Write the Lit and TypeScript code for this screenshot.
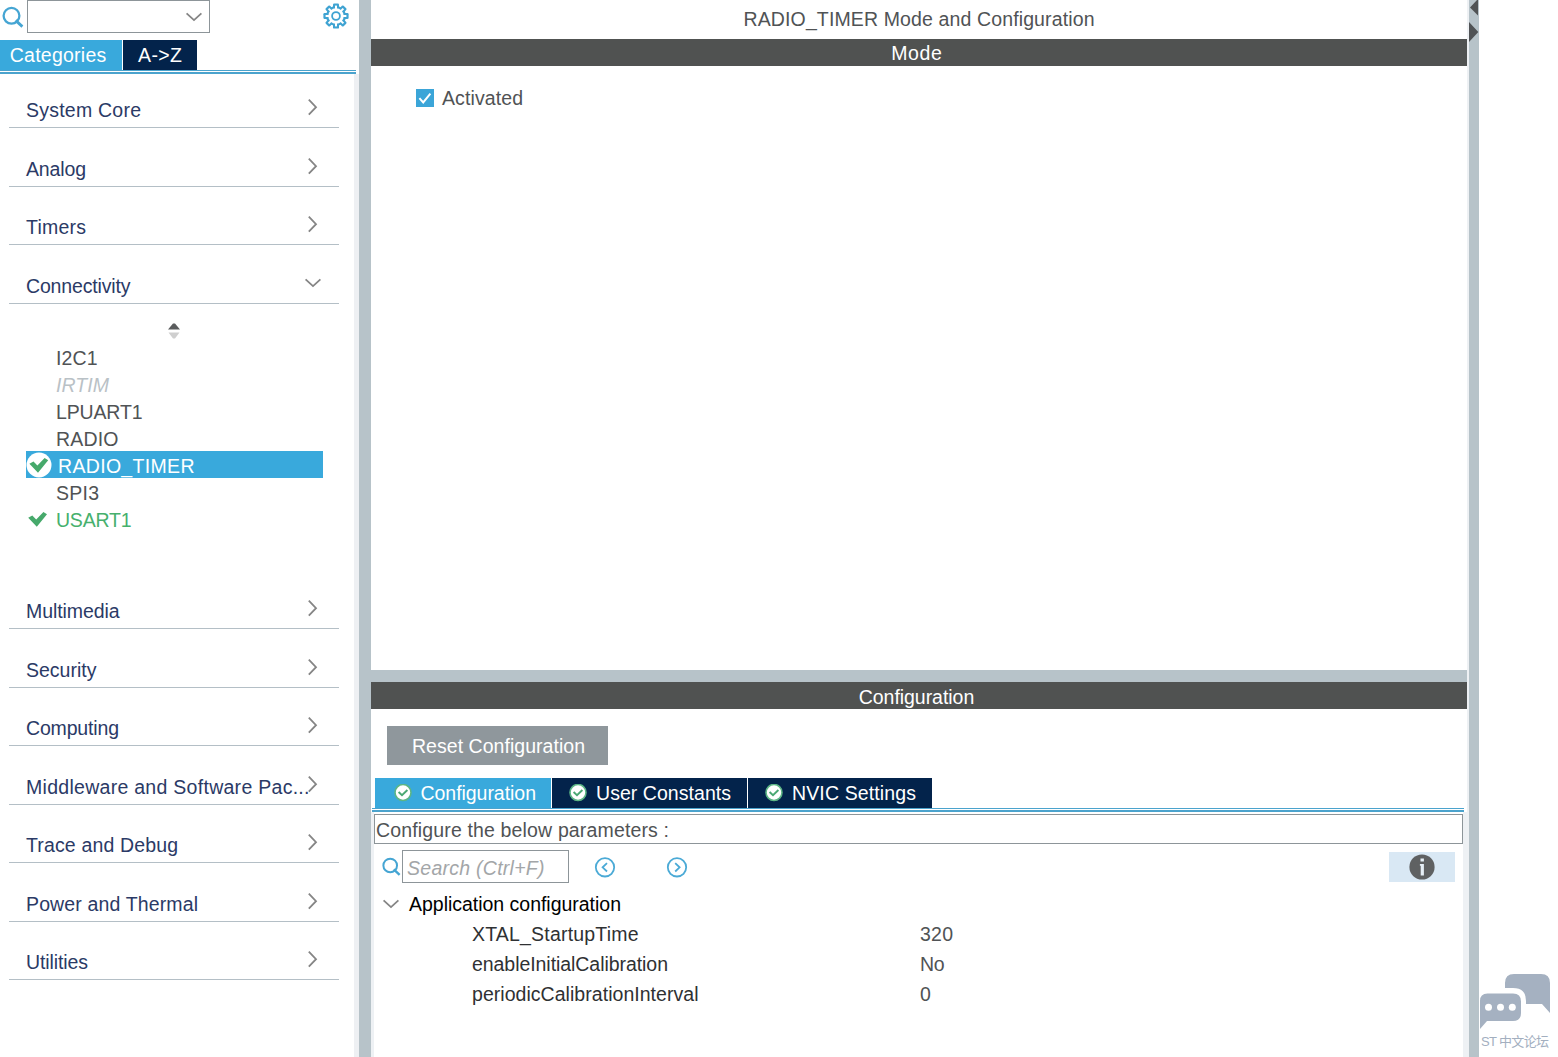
import { LitElement, html, css, svg, nothing } from "lit";
import { customElement, property } from "lit/decorators.js";
import { classMap } from "lit/directives/class-map.js";

/** Text run whose tracking is adjusted so that it spans a given width. */
@customElement("fit-text")
class FitText extends LitElement {
  static styles = css`
    :host { display: inline-block; white-space: pre; }
    .run { display: inline-block; }
  `;
  @property({ type: Number }) w = 0;
  @property() text = "";
  render() {
    return html`<span class="run">${this.text}</span>`;
  }
  updated() {
    const run = this.renderRoot.querySelector(".run") as HTMLElement;
    run.style.letterSpacing = "0px";
    const natural = run.getBoundingClientRect().width;
    const spacing = (this.w - natural) / Math.max(1, this.text.length - 1);
    run.style.letterSpacing = `${spacing}px`;
    run.style.marginRight = `${-spacing}px`;
  }
}

const fit = (text: string, w: number) => html`<fit-text .text=${text} .w=${w}></fit-text>`;

const chevronRight = html`<svg class="chev" width="18" height="18" viewBox="0 0 18 18">
  <path d="M4.8 1.7 12 9.2 4.8 16.7" fill="none" stroke="#858585" stroke-width="1.8"/></svg>`;
const chevronDown = html`<svg class="chev" width="18" height="18" viewBox="0 0 18 18">
  <path d="M1.6 5.4 9 12.1 16.4 5.4" fill="none" stroke="#858585" stroke-width="1.8"/></svg>`;

const magnifier = (size: number) => html`<svg width=${size} height=${size} viewBox="0 0 22 22">
  <circle cx="9.5" cy="9.8" r="7.9" fill="none" stroke="#45a5d3" stroke-width="2.3"/>
  <path d="M13.6 14.4 20.4 20.6" stroke="#45a5d3" stroke-width="2.8"/></svg>`;

const gearTeeth = Array.from({ length: 8 }, (_, i) => i * 45);
const gear = html`<svg width="26" height="26" viewBox="-13 -13 26 26">
  <g fill="#3fa3d2">${gearTeeth.map((a) => svg`<rect x="-3" y="-12.6" width="6" height="5" rx="1.2" transform="rotate(${a})"/>`)}</g>
  <circle r="10" fill="#3fa3d2"/>
  <g fill="#fff">${gearTeeth.map((a) => svg`<rect x="-1" y="-10.4" width="2" height="4" transform="rotate(${a})"/>`)}</g>
  <circle r="7.7" fill="#fff"/>
  <circle r="3.9" fill="none" stroke="#3fa3d2" stroke-width="1.8"/></svg>`;

const tick = svg`<path d="M0.2 6.8 4.3 4.6 8.2 8.4 15.4 1 19 3.2 8.8 15.8 Z" fill="#46a96b"/>`;
const plainTick = html`<svg width="20" height="17" viewBox="0 0 20 17">${tick}</svg>`;
const ringTick = html`<svg width="26" height="26" viewBox="0 0 26 26">
  <circle cx="13" cy="13" r="12.5" fill="#fff"/><g transform="translate(3.2 5)">${tick}</g></svg>`;

const tabTick = html`<svg width="18" height="18" viewBox="0 0 18 18">
  <circle cx="9" cy="8.5" r="8" fill="#fff" stroke="#5cb585" stroke-width="1.6"/>
  <path d="M4.6 8 8 11.2 13.4 6" fill="none" stroke="#4aa873" stroke-width="1.9"/></svg>`;

const navCircle = (d: string) => html`<svg width="22" height="22" viewBox="0 0 22 22">
  <circle cx="11" cy="11.3" r="9.2" fill="none" stroke="#4baad6" stroke-width="1.8"/>
  <path d=${d} fill="none" stroke="#4baad6" stroke-width="1.8"/></svg>`;

type Category = { name: string; w: number; open?: boolean };
const categories: Category[] = [
  { name: "System Core", w: 115 },
  { name: "Analog", w: 60 },
  { name: "Timers", w: 60 },
  { name: "Connectivity", w: 104.5, open: true },
  { name: "Multimedia", w: 93.5 },
  { name: "Security", w: 70.5 },
  { name: "Computing", w: 93 },
  { name: "Middleware and Software Pac...", w: 283.5 },
  { name: "Trace and Debug", w: 152 },
  { name: "Power and Thermal", w: 172 },
  { name: "Utilities", w: 62 },
];

type Peripheral = { name: string; w: number; state?: "off" | "selected" | "on" };
const peripherals: Peripheral[] = [
  { name: "I2C1", w: 41.5 },
  { name: "IRTIM", w: 53, state: "off" },
  { name: "LPUART1", w: 86.5 },
  { name: "RADIO", w: 62.5 },
  { name: "RADIO_TIMER", w: 136.5, state: "selected" },
  { name: "SPI3", w: 43 },
  { name: "USART1", w: 75.5, state: "on" },
];

const parameters = [
  { name: "XTAL_StartupTime", w: 166.5, value: "320", vw: 33 },
  { name: "enableInitialCalibration", w: 196, value: "No", vw: 24.5 },
  { name: "periodicCalibrationInterval", w: 226.5, value: "0", vw: 10.5 },
];

@customElement("category-panel")
class CategoryPanel extends LitElement {
  static styles = css`
    :host { display: flex; flex-direction: column; width: 359px; flex: none; background: #fff; }
    .search { display: flex; height: 40px; align-items: flex-start; }
    .search .glass { padding: 6px 3px 0 2px; width: 22px; flex: none; }
    .combo { box-sizing: border-box; width: 183px; height: 33px; border: 1px solid #8d9599; display: flex; align-items: center; justify-content: flex-end; padding-right: 6px; }
    .search .gear { margin: 3px 0 0 113px; }
    svg { display: block; }
    .tabs { display: flex; gap: 1px; height: 30px; color: #fff; }
    .tab { display: flex; align-items: center; justify-content: center; background: #03234b; width: 74px; box-sizing: border-box; padding-bottom: 1px; }
    .tab.active { background: #39a9dc; width: 122px; padding-right: 6px; }
    .rule { height: 1px; border-top: 1px solid #4ba3cd; border-bottom: 2px solid #4ba3cd; width: 356px; }
    .body { flex: 1; border-right: 5px solid #eef0f3; color: #2b3a66; }
    .cat { box-sizing: border-box; height: 58.55px; margin: 0 15px 0 9px; border-bottom: 1px solid #b4bfc6; padding: 0 17px 6px 17px; display: flex; align-items: flex-end; justify-content: space-between; line-height: 21px; white-space: nowrap; }
    .cat:first-child { height: 54px; }
    .cat fit-text { width: 0; }
    .cat .chev { margin-bottom: 5px; }
    .items { height: 266.9px; color: #505355; }
    .sorter { height: 20.35px; padding: 19px 0 0 167px; }
    .item { display: flex; align-items: center; height: 27px; margin: 0 31px 0 26px; line-height: 22px; }
    .item .mark { width: 30px; flex: none; display: flex; box-sizing: border-box; }
    .item.off { color: #b9c1c6; font-style: italic; }
    .item.on { color: #46b06d; }
    .item.on .mark { padding: 2px 0 0 2px; }
    .item.selected { background: #39a9dc; color: #fff; }
    .item.selected .mark { width: 32px; }
    .item.selected svg { margin-top: 1px; }
    .item fit-text { padding-top: 4px; }
  `;
  render() {
    return html`
      <div class="search">
        <div class="glass">${magnifier(22)}</div>
        <div class="combo">${chevronDown}</div>
        <div class="gear">${gear}</div>
      </div>
      <div class="tabs">
        <div class="tab active">${fit("Categories", 96.5)}</div>
        <div class="tab">${fit("A->Z", 44)}</div>
      </div>
      <div class="rule"></div>
      <div class="body">
        ${categories.map((c) => html`
          <div class="cat">${fit(c.name, c.w)}${c.open ? chevronDown : chevronRight}</div>
          ${c.open ? this.renderItems() : nothing}`)}
      </div>`;
  }
  renderItems() {
    return html`<div class="items">
      <div class="sorter"><svg width="14" height="16" viewBox="0 0 14 16">
        <path d="M1 6.500 6 0.500H8L13 6.500Z" fill="#5a5c5d"/><path d="M1.500 9.500H12.500L8 15.500H6Z" fill="#cfcfcf"/></svg></div>
      ${peripherals.map((p) => html`
        <div class=${classMap({ item: true, off: p.state === "off", on: p.state === "on", selected: p.state === "selected" })}>
          <span class="mark">${p.state === "selected" ? ringTick : p.state === "on" ? plainTick : nothing}</span>
          ${fit(p.name, p.w)}
        </div>`)}
    </div>`;
  }
}

@customElement("config-panel")
class ConfigPanel extends LitElement {
  static styles = css`
    :host { display: flex; flex-direction: column; width: 1096px; flex: none; background: #fff; color: #505355; }
    svg { display: block; }
    .title { height: 39px; display: flex; align-items: center; justify-content: center; box-sizing: border-box; padding-bottom: 2px; }
    .bar { height: 27px; background: #505251; color: #fff; display: flex; align-items: center; justify-content: center; padding-top: 3px; box-sizing: border-box; padding-right: 5px; }
    .bar.top { padding-top: 1px; }
    .mode { height: 604px; box-sizing: border-box; padding: 23px 0 0 45px; }
    .check { display: flex; align-items: center; gap: 8px; height: 18px; }
    .check fit-text { padding-bottom: 1px; }
    .split { height: 12px; background: #b7c3c9; }
    .reset { width: 221px; height: 39px; margin: 17px 0 13px 16px; background: #8f979c; color: #fff; display: flex; align-items: center; justify-content: center; box-sizing: border-box; padding-top: 1px; padding-left: 2px; }
    .tabs { display: flex; gap: 1px; height: 30px; margin-left: 4px; color: #fff; }
    .tab { background: #03234b; display: flex; align-items: center; box-sizing: border-box; padding-left: 17px; gap: 9px; }
    .tab.conf { background: #39a9dc; width: 176px; padding-left: 18.500px; }
    .tab fit-text { padding-bottom: 1px; }
    .tab.user { width: 195px; }
    .tab.nvic { width: 184px; }
    .rule { height: 1px; border-top: 1px solid #4ba3cd; border-bottom: 2px solid #4ba3cd; margin: 0 3px 0 1px; }
    .sheet { flex: 1; border-left: 3px solid #eef1f4; padding-top: 2px; box-sizing: border-box; }
    .hint { box-sizing: border-box; width: 1089px; height: 30px; border: 1px solid #8d9599; padding-left: 1px; display: flex; align-items: center; padding-top: 2px; }
    .tools { display: flex; align-items: center; height: 33px; margin-top: 6px; padding-left: 7.500px; }
    .field { box-sizing: border-box; width: 167px; height: 33px; border: 1px solid #8d9599; margin-left: 1.500px; padding: 3px 0 0 4px; color: #a3a6a8; font-style: italic; display: flex; align-items: center; }
    .prev { margin-left: 25px; }
    .next { margin-left: 50px; }
    .info { width: 66px; height: 30px; background: #d9e8f4; margin-left: 701px; display: flex; align-items: center; justify-content: center; }
    .group { display: flex; align-items: center; height: 30px; margin-top: 6px; padding-left: 8px; gap: 9px; color: #000; }
    .row { display: grid; grid-template-columns: 448px 1fr; align-items: center; height: 30px; padding: 0 0 0 98px; box-sizing: border-box; }
    .name { color: #2f3133; }
    .strip { display: flex; flex: 1; }
    .edge { width: 4px; background: #eef1f4; flex: none; }
  `;
  render() {
    return html`
      <div class="title">${fit("RADIO_TIMER Mode and Configuration", 351)}</div>
      <div class="bar top">${fit("Mode", 50.5)}</div>
      <div class="mode">
        <div class="check">
          <svg width="18" height="18" viewBox="0 0 18 18"><rect width="18" height="18" fill="#3ba5d8"/>
            <path d="M3.4 9.2 7.2 13.4 14.4 4.6" fill="none" stroke="#fff" stroke-width="2"/></svg>
          ${fit("Activated", 81)}
        </div>
      </div>
      <div class="split"></div>
      <div class="bar">${fit("Configuration", 115.5)}</div>
      <div class="reset">${fit("Reset Configuration", 173)}</div>
      <div class="tabs">
        <div class="tab conf">${tabTick}${fit("Configuration", 115.5)}</div>
        <div class="tab user">${tabTick}${fit("User Constants", 135)}</div>
        <div class="tab nvic">${tabTick}${fit("NVIC Settings", 124)}</div>
      </div>
      <div class="rule"></div>
      <div class="strip">
        <div class="sheet">
          <div class="hint">${fit("Configure the below parameters :", 293)}</div>
          <div class="tools">
            ${magnifier(19)}
            <div class="field">${fit("Search (Ctrl+F)", 137.5)}</div>
            <div class="prev">${navCircle("M13 7.1 8.6 11.3 13 15.5")}</div>
            <div class="next">${navCircle("M9.2 7.1 13.6 11.3 9.2 15.5")}</div>
            <div class="info"><svg width="26" height="26" viewBox="0 0 26 26">
              <circle cx="13" cy="13" r="12.6" fill="#5f6162"/>
              <path d="M11.5 4.6h3.4v3h-3.4zM10.9 10h4v11.600h-3.200v-9.800h-0.800z" fill="#e6eff6"/></svg></div>
          </div>
          <div class="group">${chevronDown}${fit("Application configuration", 212)}</div>
          ${parameters.map((p) => html`<div class="row">
            <span class="name">${fit(p.name, p.w)}</span><span>${fit(p.value, p.vw)}</span></div>`)}
        </div>
        <div class="edge"></div>
      </div>`;
  }
}

@customElement("app-root")
class AppRoot extends LitElement {
  static styles = css`
    :host { display: flex; width: 1558px; height: 1057px; overflow: hidden; background: #fff; font-family: "Liberation Sans", Arial, "Noto Sans CJK SC", sans-serif; font-size: 19.5px; line-height: 22px; }
    .divider { width: 12px; background: #b7c3c9; flex: none; }
    .gap { width: 2px; background: #eef1f4; flex: none; }
    .rail { width: 10px; background: #b7c3c9; flex: none; }
    .rail svg, .forum svg { display: block; }
    .forum { flex: 1; display: flex; flex-direction: column; justify-content: flex-end; color: #a3afbf; font-size: 13px; }
    .forum .label { line-height: 16px; height: 16px; margin: 4px 0 7px 2px; }
  `;
  render() {
    return html`
      <category-panel></category-panel>
      <div class="divider"></div>
      <config-panel></config-panel>
      <div class="gap"></div>
      <div class="rail"><svg width="10" height="44" viewBox="0 0 10 44">
        <path d="M9 0V15.5L1 7.6 8 0ZM0 22 9.3 32 0 42Z" fill="#505355"/></svg></div>
      <div class="forum">
        <svg width="72" height="58" viewBox="1479 972 72 58" fill="#a5b1c1">
          <path d="M1505 988V983q0-9 9-9H1541q9 0 9 9V1013L1542 1004H1526V1001q0-13-13-13Z"/>
          <path d="M1480 1029V1001q0-7.500 7.500-7.500H1513q8 0 8 8V1013q0 8-8 8H1487Z"/>
          <g fill="#fff"><circle cx="1488.500" cy="1007.300" r="3.500"/><circle cx="1500.500" cy="1007.300" r="3.500"/><circle cx="1512.300" cy="1007.300" r="3.500"/></g>
        </svg>
        <div class="label">${fit("ST 中文论坛", 68)}</div>
      </div>`;
  }
}
